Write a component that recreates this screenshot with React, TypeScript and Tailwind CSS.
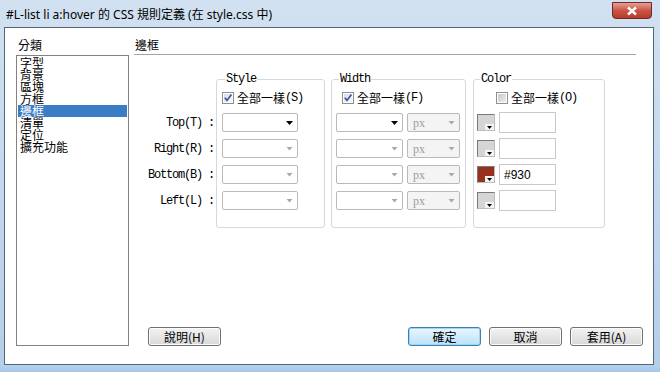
import React from "react";

const cjk = "font-['Noto_Sans_CJK_TC',sans-serif]";
const mono = "font-['Liberation_Mono','Noto_Sans_CJK_TC',monospace] tracking-[-1.2px]";

const categories = ["字型", "背景", "區塊", "方框", "邊框", "清單", "定位", "擴充功能"];
const sides = ["Top(T) :", "Right(R) :", "Bottom(B) :", "Left(L) :"];

const Arrow = ({ dark }: { dark?: boolean }) =>
  dark ? (
    <svg width="7" height="4" viewBox="0 0 7 4">
      <path d="M0 0H7L3.5 4Z" fill="#000" />
    </svg>
  ) : (
    <svg width="7" height="4" viewBox="0 0 7 4">
      <path d="M0.5 0H6.5L3.5 3.5Z" fill="#a8a8a8" />
    </svg>
  );

const Check = ({ checked }: { checked?: boolean }) => (
  <svg width="12" height="12" viewBox="0 0 12 12">
    <defs>
      <linearGradient id={checked ? "ck1" : "ck0"} x1="0" y1="0" x2="1" y2="1">
        <stop offset="0" stopColor={checked ? "#d8dde4" : "#c9c9c9"} />
        <stop offset="1" stopColor={checked ? "#fbfbfb" : "#ececec"} />
      </linearGradient>
    </defs>
    <rect x="0.5" y="0.5" width="11" height="11" fill="#fff" stroke="#8e8f8f" />
    <rect x="2" y="2" width="8" height="8" fill={`url(#${checked ? "ck1" : "ck0"})`} />
    {checked && (
      <path d="M2.8 5.8L5 8.4L9.4 2.6" fill="none" stroke="#3f52a0" strokeWidth="1.7" />
    )}
  </svg>
);

const Select = ({ className, dark, text }: { className: string; dark?: boolean; text?: string }) => (
  <div
    className={`flex h-[19px] items-center justify-between rounded-[2px] border border-[#b9b9b9] pl-[5px] pr-[4px] ${className}`}
  >
    <span className="font-['Liberation_Serif',serif] text-[12px] leading-[12px] text-[#9c9c9c]">{text}</span>
    <Arrow dark={dark} />
  </div>
);

const Swatch = ({ red }: { red?: boolean }) => (
  <div
    className={`relative h-[17px] w-[18px] border border-[#7a7a7a] border-r-[#bdbdbd] border-b-[#bdbdbd] ${
      red ? "bg-[#98301e]" : "bg-[#d5d5d5]"
    }`}
  >
    <div className="absolute right-0 bottom-0 flex h-[6px] w-[9px] items-center justify-center bg-[#f4f4f4]">
      <svg width="5" height="3" viewBox="0 0 5 3">
        <path d="M0 0H5L2.5 3Z" fill="#000" />
      </svg>
    </div>
  </div>
);

const Btn = ({ children, primary }: { children: React.ReactNode; primary?: boolean }) => (
  <button
    className={`h-[19px] w-[73px] rounded-[3px] border text-[12px] leading-[16px] text-black ${cjk} ${
      primary
        ? "border-[#3c7fb1] bg-linear-to-b from-[#eaf6fd] to-[#b9e2f9] shadow-[inset_0_0_0_1px_#9fd6f7]"
        : "border-[#707070] bg-linear-to-b from-[#f3f3f3] to-[#d8d8d8] shadow-[inset_0_0_0_1px_#fbfbfb]"
    }`}
  >
    {children}
  </button>
);

export default function App() {
  return (
    <div className="flex h-[372px] w-[660px] flex-col overflow-hidden bg-linear-to-b from-[#d2e1f1] to-[#b5cee9]">
      {/* title bar */}
      <div className="flex h-[27px] items-start">
        <div className="pt-[7px] pl-[6px] font-['Noto_Sans','Noto_Sans_CJK_TC',sans-serif] text-[12px] leading-[16px] text-black">
          #L-list li a:hover 的 CSS 規則定義 (在 style.css 中)
        </div>
        <div className="mt-[2px] mr-[8px] ml-auto flex h-[17px] w-[40px] items-center justify-center rounded-b-[4px] border border-[#6b2a22] bg-linear-to-b from-[#e3a093] via-[#c95545] to-[#b63b2a]">
          <svg width="12" height="10" viewBox="0 0 12 10">
            <path d="M2 1.5L10 8.5M10 1.5L2 8.5" stroke="#fff" strokeWidth="2.4" />
          </svg>
        </div>
      </div>

      <div className="flex h-[338px]">
        <div className="w-[4px]" />
        {/* client area */}
        <div className="flex h-[338px] w-[650px] border border-[#53657c] bg-white">
          {/* category list */}
          <div className="ml-[11px] flex w-[113px] flex-col pt-[11px]">
            <div className={`h-[12px] pl-[2px] text-[12px] leading-[12px] text-black ${cjk}`}>分類</div>
            <div className="mt-[4px] h-[291px] border border-[#828282] p-[1px]">
              {categories.map((c) => (
                <div
                  key={c}
                  className={`h-[12px] pl-[2px] text-[12px] leading-[12px] ${cjk} ${
                    c === "邊框" ? "bg-[#3a7dc6] text-white" : "text-black"
                  }`}
                >
                  {c}
                </div>
              ))}
            </div>
          </div>

          {/* panel */}
          <div className="ml-[5px] flex flex-1 flex-col">
            <div className="w-[502px] border-b border-[#a3a3a3] pt-[11px] pb-[3px]">
              <div className={`h-[12px] pl-[1px] text-[12px] leading-[12px] text-black ${cjk}`}>邊框</div>
            </div>

            <div className="mt-[18px] flex">
              <div className="flex w-[80px] flex-col items-end gap-[7px] pt-[40px]">
                {sides.map((s) => (
                  <div key={s} className={`flex h-[19px] items-center text-[12px] text-black whitespace-pre ${mono}`}>
                    {s}
                  </div>
                ))}
              </div>

              <fieldset className="ml-[2px] h-[155px] w-[109px] rounded-[3px] border border-[#d3d9de] pl-[5px]">
                <legend className={`ml-[3px] px-[1px] text-[12px] leading-[12px] text-black ${mono}`}>Style</legend>
                <div className="mt-[7px] flex h-[12px] items-center gap-[3px]">
                  <Check checked />
                  <span className={`text-[12px] leading-[12px] ${cjk}`}>全部一樣</span>
                  <span className={`-ml-[3px] text-[12px] leading-[12px] ${mono}`}>(S)</span>
                </div>
                <div className="mt-[9px] flex flex-col gap-[7px]">
                  {sides.map((s, i) => (
                    <Select key={s} className="w-[76px] bg-white" dark={i === 0} />
                  ))}
                </div>
              </fieldset>

              <fieldset className="ml-[6px] h-[155px] w-[135px] rounded-[3px] border border-[#d3d9de] pl-[4px]">
                <legend className={`ml-[3px] px-[1px] text-[12px] leading-[12px] text-black ${mono}`}>Width</legend>
                <div className="mt-[7px] ml-[6px] flex h-[12px] items-center gap-[3px]">
                  <Check checked />
                  <span className={`text-[12px] leading-[12px] ${cjk}`}>全部一樣</span>
                  <span className={`-ml-[3px] text-[12px] leading-[12px] ${mono}`}>(F)</span>
                </div>
                <div className="mt-[9px] flex flex-col gap-[7px]">
                  {sides.map((s, i) => (
                    <div key={s} className="flex gap-[4px]">
                      <Select className="w-[67px] bg-white" dark={i === 0} />
                      <Select className="w-[53px] bg-[#f4f4f4]" text="px" />
                    </div>
                  ))}
                </div>
              </fieldset>

              <fieldset className="ml-[7px] h-[155px] w-[132px] rounded-[3px] border border-[#d3d9de] pl-[3px]">
                <legend className={`ml-[3px] px-[1px] text-[12px] leading-[12px] text-black ${mono}`}>Color</legend>
                <div className="mt-[7px] ml-[19px] flex h-[12px] items-center gap-[3px]">
                  <Check />
                  <span className={`text-[12px] leading-[12px] ${cjk}`}>全部一樣</span>
                  <span className={`-ml-[3px] text-[12px] leading-[12px] ${mono}`}>(O)</span>
                </div>
                <div className="mt-[9px] flex flex-col gap-[7px]">
                  {sides.map((s, i) => (
                    <div key={s} className="flex h-[19px] items-center gap-[4px]">
                      <Swatch red={i === 2} />
                      <div className="flex h-[21px] w-[57px] items-center border border-[#c9c9c9] bg-white pl-[4px] font-['Liberation_Sans',sans-serif] text-[12px] text-black">
                        {i === 2 ? "#930" : ""}
                      </div>
                    </div>
                  ))}
                </div>
              </fieldset>
            </div>

            <div className="mt-auto mb-[18px] ml-[14px] flex">
              <Btn>說明(H)</Btn>
              <div className="ml-[187px] flex gap-[8px]">
                <Btn primary>確定</Btn>
                <Btn>取消</Btn>
                <Btn>套用(A)</Btn>
              </div>
            </div>
          </div>
        </div>
        <div className="flex-1" />
      </div>
      <div className="flex-1 bg-linear-to-b from-[#b4d2ec] to-[#a5c7e6]" />
    </div>
  );
}
